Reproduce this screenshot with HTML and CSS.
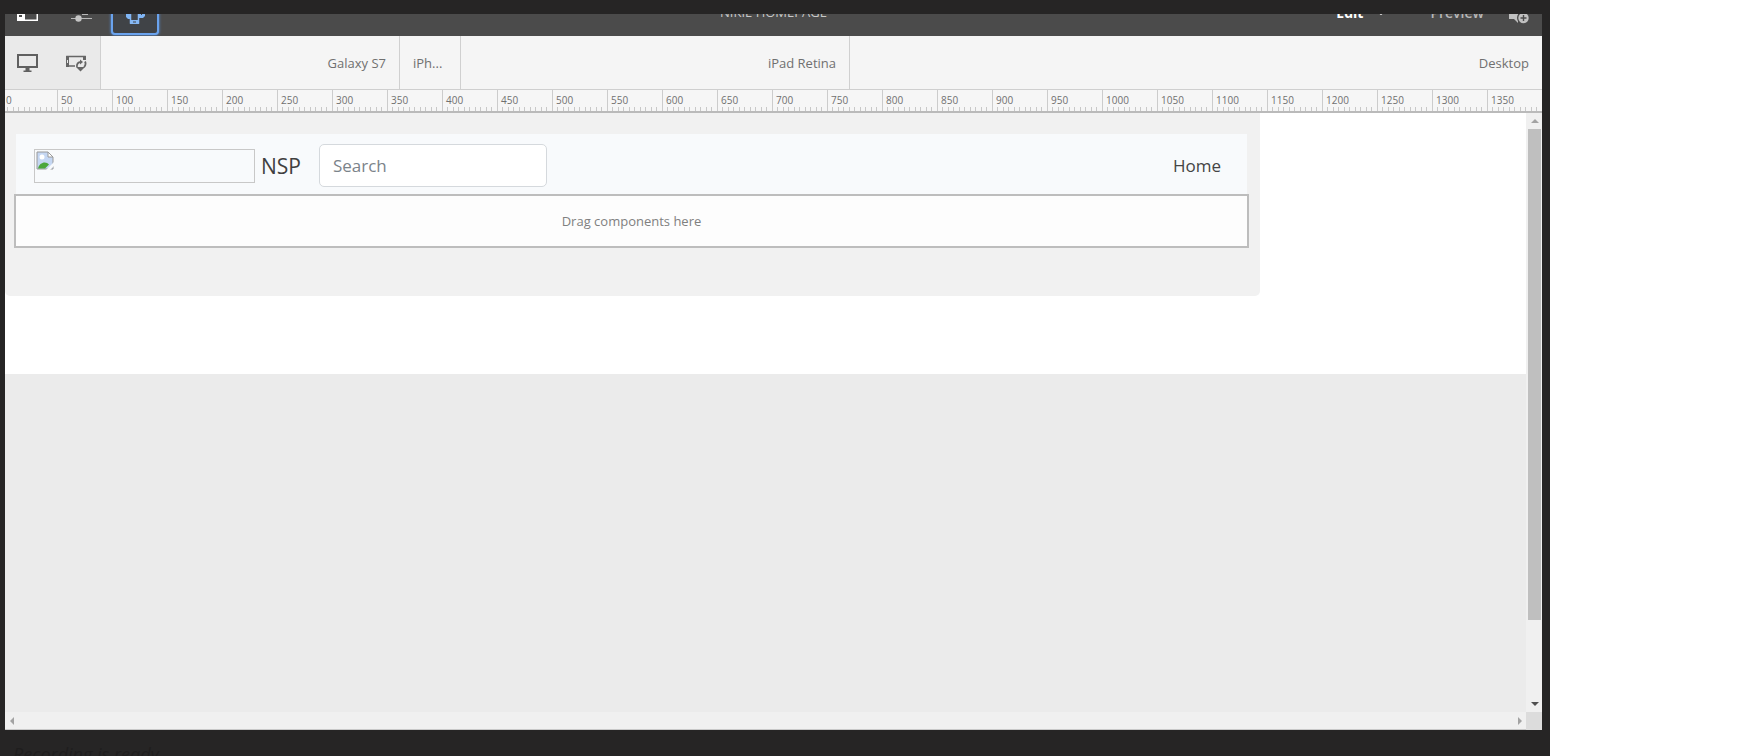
FILE: index.html
```html
<!DOCTYPE html>
<html lang="en">
<head>
<meta charset="utf-8">
<title>Page editor</title>
<link rel="stylesheet" href="styles.css">
</head>
<body>
<div class="frame">
  <div class="editor">
    <header class="topbar">
      <div class="topbar-row">
        <div class="tools">
          <button class="tool" aria-label="Side panel"><svg width="24" height="24" viewBox="0 0 24 24"><path d="M.75 4.750h19.500v15.500H.75z" fill="none" stroke="#fff" stroke-width="1.500"/><path d="M0 4h8v17H0z" fill="#fff"/><path d="M2 15h3v2H2z" fill="#4b4b4b"/></svg></button>
          <button class="tool" aria-label="Page information"><svg width="24" height="24" viewBox="0 0 24 24"><path d="M1 18.500h21M12 14.500h6M1 8.500h20" stroke="#b8b8b8" fill="none"/><circle cx="8.500" cy="18.500" r="3.200" fill="#c4c4c4"/></svg></button>
          <button class="tool tool-active" aria-label="Emulator"><svg width="24" height="24" viewBox="0 0 24 24"><path d="M3 8h4v11H5l-2-2zM16 8h6v8l-2 2h-4z" fill="#7fb5f5"/><path d="M18 8h1v7h-1z" fill="#404347"/><path d="M7.500 3h8v20h-8z" fill="#404347" stroke="#85b8f5" stroke-width="1.500"/><path d="M7 20h9v4H7z" fill="#85b8f5"/><path d="M10 21.500h3v1h-3z" fill="#404347"/></svg></button>
        </div>
        <div class="page-title">NIKIE HOMEPAGE</div>
        <div class="modes">
          <button class="mode mode-current">Edit</button>
          <button class="chevron" aria-label="Select mode"><svg width="8" height="6" viewBox="0 0 8 6"><path d="M0 1l4 4 4-4" fill="none" stroke="#ddd" stroke-width="2"/></svg></button>
          <button class="mode">Preview</button>
          <button class="annotate" aria-label="Annotate"><svg width="22" height="24" viewBox="0 0 22 24"><path d="M1 6h17v7h-8v10l-4-4H1z" fill="#c0c0c0"/><circle cx="15.500" cy="18" r="6.500" fill="#4b4b4b"/><circle cx="15.500" cy="18" r="5.200" fill="#c0c0c0"/><path d="M12.500 18h6M15.500 15v6" stroke="#4b4b4b" stroke-width="1.400"/></svg></button>
        </div>
      </div>
    </header>

    <div class="devices">
      <div class="device-tools">
        <button class="device-tool" aria-label="Choose device"><svg width="24" height="20" viewBox="0 0 24 20"><path d="M1 2h19v12H1z" fill="none" stroke="#606060" stroke-width="2"/><path d="M8.500 15h4v2.500h2V19h-8v-1.500h2z" fill="#606060"/></svg></button>
        <button class="device-tool" aria-label="Rotate device"><svg width="22" height="18" viewBox="0 0 22 18"><path d="M10 12H2V2.500h18V5" fill="none" stroke="#666" stroke-width="1.600"/><path d="M1 2h3v11H1zM18 2h3v4h-3z" fill="#666"/><path d="M2 6h1v3H2z" fill="#eaeaea"/><path d="M16 8c-3 0-4.500 2-4 5" fill="none" stroke="#666" stroke-width="1.800"/><path d="M15 5.500l3 2.500-3 2.500z" fill="#666"/><path d="M11 13h9l-4.500 4.500z" fill="#666"/><path d="M20 7.500c1 2 .5 4-1 5.500" fill="none" stroke="#666" stroke-width="1.800"/></svg></button>
      </div>
      <button class="device galaxy">Galaxy S7</button>
      <button class="device iphone">iPh...</button>
      <button class="device ipad">iPad Retina</button>
      <button class="device desktop">Desktop</button>
    </div>

    <div class="ruler">
      <span class="first">0</span><span>50</span><span>100</span><span>150</span><span>200</span><span>250</span><span>300</span><span>350</span><span>400</span><span>450</span><span>500</span><span>550</span><span>600</span><span>650</span><span>700</span><span>750</span><span>800</span><span>850</span><span>900</span><span>950</span><span>1000</span><span>1050</span><span>1100</span><span>1150</span><span>1200</span><span>1250</span><span>1300</span><span>1350</span>
    </div>

    <div class="viewport">
      <main class="canvas">
        <div class="paper">
          <div class="container">
            <nav class="navbar">
              <div class="broken" role="img" aria-label="Logo"><svg width="18" height="20" viewBox="0 0 18 20"><path d="M1 1h11l5 5v12H1z" fill="#c5d7f3" stroke="#9a9a9a"/><path d="M12 1v5h5z" fill="#fff" stroke="#9a9a9a"/><circle cx="6" cy="6" r="2.500" fill="#fff"/><path d="M2 17.500c1-6 8-8 11-4l-4 4z" fill="#4ba73c"/><path d="M10 19l8-8v4l-4 4z" fill="#f8fafc"/></svg></div>
              <a class="brand" href="#">NSP</a>
              <input class="search" type="text" placeholder="Search" aria-label="Search">
              <a class="home" href="#">Home</a>
            </nav>
            <div class="dropzone">Drag components here</div>
          </div>
        </div>
      </main>
      <div class="vbar">
        <button class="arrow" aria-label="Scroll up"><svg width="8" height="4" viewBox="0 0 8 4"><path d="M0 4l4-4 4 4z" fill="#a3a3a3"/></svg></button>
        <div class="thumb"></div>
        <div class="track"></div>
        <button class="arrow" aria-label="Scroll down"><svg width="8" height="4" viewBox="0 0 8 4"><path d="M0 0l4 4 4-4z" fill="#505050"/></svg></button>
      </div>
      <div class="hbar">
        <button class="arrow" aria-label="Scroll left"><svg width="4" height="8" viewBox="0 0 4 8"><path d="M4 0L0 4l4 4z" fill="#a3a3a3"/></svg></button>
        <button class="arrow" aria-label="Scroll right"><svg width="4" height="8" viewBox="0 0 4 8"><path d="M0 0l4 4-4 4z" fill="#a3a3a3"/></svg></button>
      </div>
      <div class="corner"></div>
    </div>
  </div>
  <footer class="status">Recording is ready</footer>
</div>
</body>
</html>
```
FILE: styles.css
```css
* { box-sizing: border-box; }
body {
  margin: 0;
  height: 100vh;
  display: grid;
  grid-template-columns: 1550fr 207fr;
  background: #fff;
  font-family: "Open Sans", "Noto Sans", sans-serif;
  font-size: 13px;
  color: #707070;
}
button {
  border: 0;
  padding: 0;
  background: none;
  font: inherit;
  color: inherit;
}
a { color: inherit; text-decoration: none; }
svg { display: block; }

.frame {
  display: flex;
  flex-direction: column;
  height: 100vh;
  min-width: 0;
  padding: 14px 8px 0 5px;
  background: #262525;
  overflow: hidden;
}
.editor {
  flex: 1;
  min-height: 0;
  display: flex;
  flex-direction: column;
}
.status {
  height: 26px;
  padding: 12px 0 0 8px;
  font-size: 18px;
  font-style: italic;
  line-height: 24px;
  color: #1f1e1e;
  overflow: hidden;
}

/* Scrolled partly out of view: only the lower edge of the row shows. */
.topbar {
  height: 22px;
  flex: none;
  display: flex;
  align-items: flex-end;
  overflow: hidden;
  background: #4b4b4b;
}
.topbar-row {
  flex: 1;
  height: 48px;
  display: grid;
  grid-template-columns: 1fr auto 1fr;
  align-items: center;
}
.tools { display: flex; gap: 5px; }
.tool {
  width: 48px;
  height: 46px;
  display: grid;
  place-items: center;
}
.tool-active {
  border: 2px solid #6aa3ee;
  border-radius: 4px;
  background: #404347;
  box-shadow: 0 0 3px #5a97ea;
}
.page-title { color: #c8c8c8; }
.modes {
  display: flex;
  justify-content: flex-end;
  align-items: center;
  padding-right: 12px;
  font-size: 14px;
  font-weight: 600;
  color: #b8b8b8;
}
.mode-current { color: #fff; font-weight: 700; }
.chevron { margin: 0 45px 0 14px; }
.annotate { margin-left: 24px; }

.devices {
  height: 54px;
  flex: none;
  display: flex;
  background: #f5f5f5;
  border-bottom: 1px solid #cfcfcf;
}
.device-tools {
  width: 96px;
  display: flex;
  background: #eaeaea;
  border-right: 1px solid #d0d0d0;
}
.device-tool {
  width: 48px;
  display: grid;
  place-items: center;
}
.device {
  padding: 0 13px;
  text-align: right;
  border-right: 1px solid #d0d0d0;
}
.galaxy { width: 299px; }
.iphone { width: 61px; text-align: left; }
.ipad { width: 389px; }
.desktop { flex: 1; border-right: 0; }

.ruler {
  height: 23px;
  flex: none;
  display: flex;
  overflow: hidden;
  border-bottom: 2px solid #bababa;
  background: repeating-linear-gradient(90deg, #c8c8c8 0 1px, transparent 1px 5px, #c8c8c8 5px 6px, transparent 6px 11px) -3px 100% / 1661px 4px no-repeat #f6f6f6;
  font-size: 10px;
  line-height: 20px;
}
.ruler span {
  flex: none;
  width: 55px;
  padding-left: 3px;
  border-left: 1px solid #ccc;
}
.ruler .first {
  width: 52px;
  padding-left: 1px;
  border-left: 0;
}

.viewport {
  flex: 1;
  min-height: 0;
  display: grid;
  grid-template-columns: 1fr 16px;
  grid-template-rows: 1fr 18px;
  background: #f0f0f0;
}
.canvas { background: #ebebeb; overflow: hidden; }
.paper { padding-bottom: 78px; background: #fff; }
.container {
  max-width: 1255px;
  padding: 21px 13px 48px 11px;
  background: #f1f1f1;
  border-radius: 0 0 5px 5px;
}
.navbar {
  height: 60px;
  display: flex;
  align-items: center;
  padding: 3px 26px 0 18px;
  background: #f8fafc;
  color: #444;
}
.broken {
  width: 221px;
  height: 34px;
  padding: 1px;
  border: 1px solid #c8c8c8;
}
.brand { margin-left: 6px; font-size: 21px; color: #404040; }
.search {
  width: 228px;
  height: 43px;
  margin-left: 18px;
  padding: 0 13px;
  border: 1px solid #d5d9dd;
  border-radius: 5px;
  background: #fff;
  font: 17px "Open Sans", sans-serif;
}
.search::placeholder { color: #7b838a; }
.home { margin-left: auto; font-size: 17px; }
.dropzone {
  height: 54px;
  margin: 0 -2px;
  display: grid;
  place-items: center;
  border: 2px solid #bdbdbd;
  background: #fdfdfd;
  color: #808080;
}

.vbar {
  display: flex;
  flex-direction: column;
  padding: 0 1px 0 2px;
}
.vbar .arrow { height: 16px; }
.thumb { flex: 492; background: #bfbfbf; }
.track { flex: 76; }
.arrow {
  width: 13px;
  display: grid;
  place-items: center;
}
.hbar {
  display: flex;
  justify-content: space-between;
  border-bottom: 1px solid #c8c8c8;
}
.corner { background: #dcdcdc; }
```
